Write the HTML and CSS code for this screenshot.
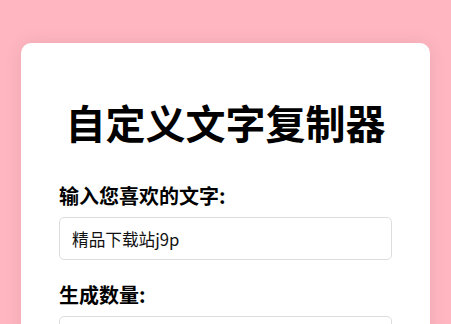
FILE: index.html
```html
<!DOCTYPE html>
<html lang="zh-CN">
<head>
<meta charset="utf-8">
<title>自定义文字复制器</title>
<link rel="stylesheet" href="styles.css">
</head>
<body>
<div class="card">
  <h1 class="title">自定义文字复制器</h1>
  <div class="field">
    <label class="label" for="text">输入您喜欢的文字:</label>
    <input class="input" id="text" type="text" value="精品下载站j9p">
  </div>
  <div class="field">
    <label class="label" for="count">生成数量:</label>
    <input class="input" id="count" type="number" value="">
  </div>
</div>
</body>
</html>
```
FILE: styles.css
```css
html, body {
  margin: 0;
  padding: 0;
}
body {
  background: #ffb6c1;
  font-family: "Noto Sans CJK SC", "Noto Sans", sans-serif;
  color: #000;
  padding: 43px 21px 0;
  height: 324px;
  box-sizing: border-box;
  overflow: hidden;
}
.card {
  background: #fff;
  border-radius: 10px;
  box-shadow: 0 0 18px rgba(0, 0, 0, 0.08);
  padding: 30px 38px 40px;
}
.title {
  margin: 20px 0 30px;
  font-size: 40px;
  line-height: 58px;
  font-weight: 700;
  text-align: center;
}
.field {
  margin-bottom: 20px;
}
.label {
  display: block;
  font-size: 20px;
  line-height: 29px;
  font-weight: 700;
  margin-bottom: 7px;
}
.input {
  display: block;
  width: 100%;
  box-sizing: border-box;
  height: 43px;
  padding: 0 12px;
  border: 1px solid #ddd;
  border-radius: 5px;
  font-family: "Noto Sans CJK SC", "Noto Sans", sans-serif;
  font-size: 16.67px;
  color: #111;
  background: #fff;
  outline: none;
}
```
